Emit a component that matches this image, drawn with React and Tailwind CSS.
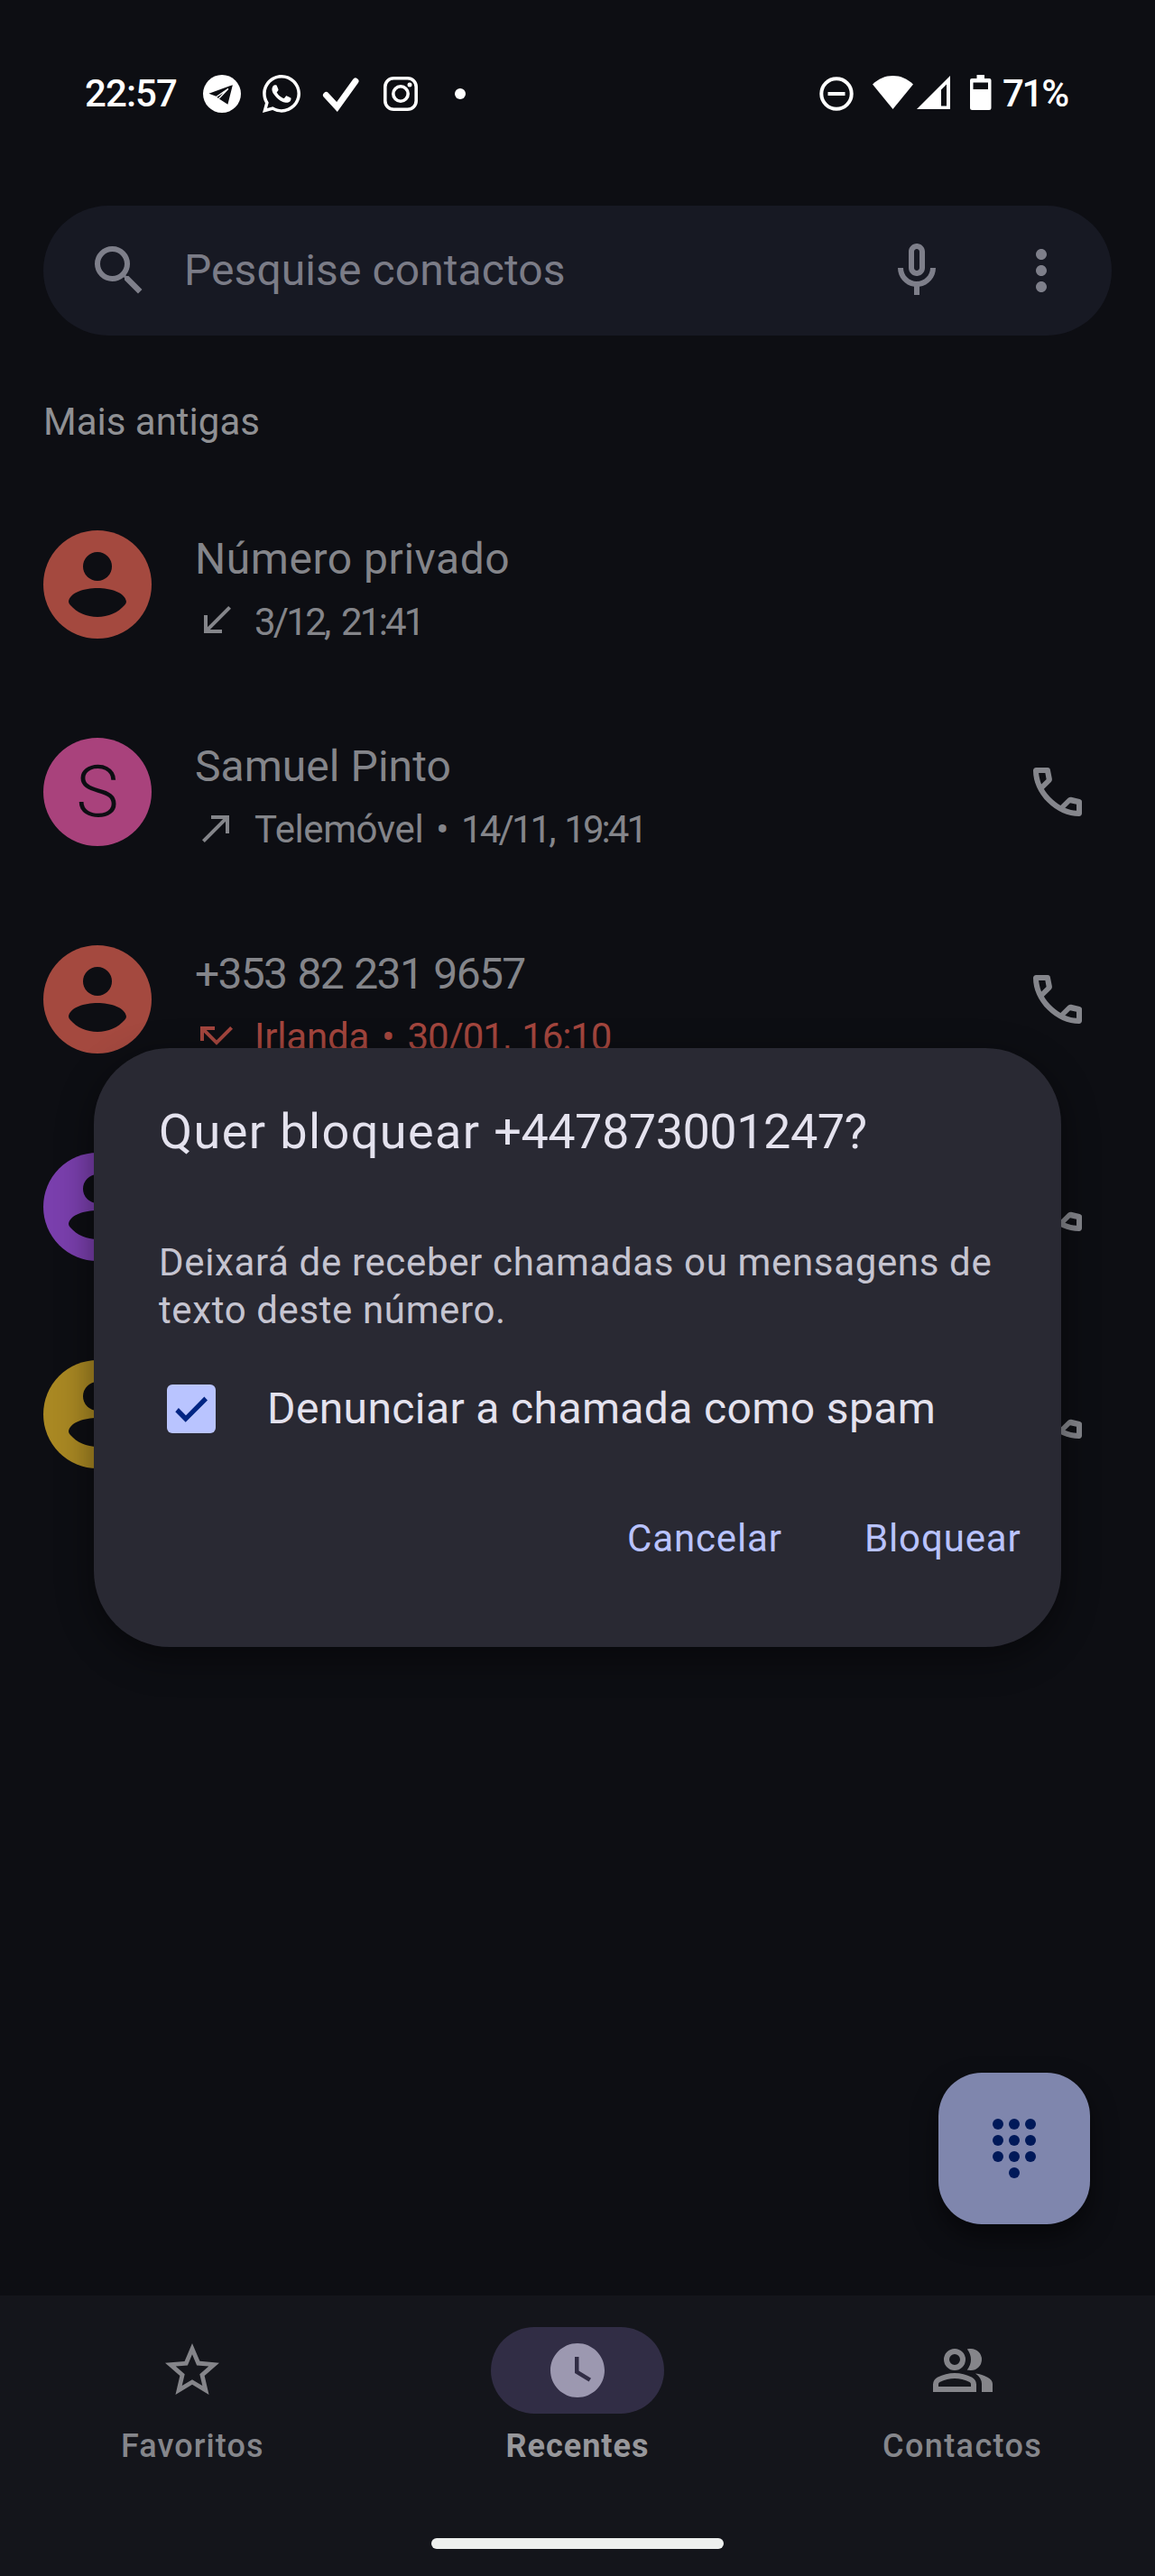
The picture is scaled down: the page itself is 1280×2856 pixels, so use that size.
import React from "react";
import {
  MdSearch,
  MdMoreVert,
  MdCallReceived,
  MdCallMade,
  MdCallMissed,
  MdStarBorder,
  MdWatchLater,
} from "react-icons/md";
import { FaWhatsapp } from "react-icons/fa";

function TelegramIcon() {
  return (
    <svg viewBox="0 0 124 124" className="size-[42px]">
      <circle cx="62" cy="62" r="62" fill="#fff" />
      <path d="M19 61 97 33 81 97 50 77 43 70Z" fill="#0d0e13" />
      <path d="M42 73 82 46 51 78" fill="none" stroke="#fff" strokeWidth="4" />
    </svg>
  );
}

function CheckMark() {
  return (
    <svg viewBox="0 0 42 42" className="size-[42px]" fill="none" stroke="#fff">
      <path d="M4.5 22.500 16.500 35.500 37 7" strokeWidth="7" strokeLinecap="round" />
    </svg>
  );
}

function InstagramIcon() {
  return (
    <svg viewBox="0 0 38 38" className="size-[38px]" fill="none" stroke="#fff">
      <rect x="1.800" y="1.800" width="34.400" height="34.400" rx="9.500" strokeWidth="3.600" />
      <circle cx="19" cy="19" r="8.200" strokeWidth="3.600" />
      <circle cx="29" cy="9" r="2.500" fill="#fff" stroke="none" />
    </svg>
  );
}

function DoNotDisturbIcon() {
  return (
    <svg viewBox="0 0 38 38" className="size-[38px]" fill="none" stroke="#fff" strokeWidth="4">
      <circle cx="19" cy="19" r="16.700" />
      <path d="M9.500 19h19" />
    </svg>
  );
}

function WifiIcon() {
  return (
    <svg viewBox="0 0 45 37" className="h-[37px] w-[45px]">
      <path d="M22.500 37 0 9.500C6.500 3.300 14 0 22.500 0S38.500 3.300 45 9.500Z" fill="#fff" />
    </svg>
  );
}

function SignalIcon() {
  return (
    <svg viewBox="0 0 37 37" className="size-[37px]">
      <path d="M37 0V37H0ZM33 9.500 27 15.500V33.500H33Z" fill="#fff" fillRule="evenodd" />
    </svg>
  );
}

function BatteryIcon() {
  return (
    <svg viewBox="0 0 24 39" className="h-[39px] w-[24px]">
      <path
        d="M7.500 0H16V4H21.500Q23.500 4 23.500 6V36.500Q23.500 39 21 39H2.500Q0 39 0 36.500V6Q0 4 2 4H7.500ZM3.500 8.500V16H20V8.500Z"
        fill="#fff"
        fillRule="evenodd"
      />
    </svg>
  );
}

function StatusBar() {
  return (
    <header className="flex h-[208px] shrink-0 items-center pr-[94px] pl-[94px] text-[42px] font-medium text-white">
      <span className="-mt-[1px] w-[131px] tracking-[-0.9px]">22:57</span>
      <TelegramIcon />
      <FaWhatsapp className="ml-[21px] size-[48px]" />
      <span className="ml-[21px]"><CheckMark /></span>
      <span className="ml-[26px]"><InstagramIcon /></span>
      <span className="ml-[41px] size-[12px] rounded-full bg-white" />
      <div className="ml-auto flex items-center">
        <DoNotDisturbIcon />
        <span className="-mt-[3px] ml-[21px]"><WifiIcon /></span>
        <span className="-mt-[3px] ml-[4px]"><SignalIcon /></span>
        <span className="-mt-[3px] ml-[22px]"><BatteryIcon /></span>
        <span className="-mt-[1px] ml-[12px] w-[75px] tracking-[-2.3px]">71%</span>
      </div>
    </header>
  );
}

function MicIcon() {
  return (
    <svg viewBox="0 0 24 24" className="size-[72px]" fill="currentColor">
      <path d="M12 14c1.660 0 3-1.340 3-3V5c0-1.660-1.340-3-3-3S9 3.340 9 5v6c0 1.660 1.340 3 3 3zm-1-9c0-.55.45-1 1-1s1 .45 1 1v6c0 .55-.45 1-1 1s-1-.45-1-1V5zm6 6c0 2.760-2.240 5-5 5s-5-2.240-5-5H5c0 3.530 2.610 6.430 6 6.920V21h2v-3.080c3.390-.49 6-3.390 6-6.920h-2z" />
    </svg>
  );
}

function SearchBar() {
  return (
    <div className="mx-[48px] mt-[20px] flex h-[144px] shrink-0 items-center rounded-full bg-[#171923] px-[42px] text-[#7e7f8a]">
      <MdSearch className="ml-[6px] size-[72px]" />
      <span className="ml-[36px] text-[48px] tracking-[0.08px] text-[#7b7c87]">Pesquise contactos</span>
      <span className="ml-auto"><MicIcon /></span>
      <MdMoreVert className="ml-[66px] size-[72px]" />
    </div>
  );
}

function PersonAvatar({ className }) {
  return (
    <svg viewBox="0 0 120 120" className={`size-[120px] shrink-0 ${className}`}>
      <circle cx="60" cy="60" r="60" fill="currentColor" />
      <circle cx="60" cy="40" r="16" fill="#0d0e13" />
      <path
        d="M28 79C29 69 46 64 60 64S91 69 92 79Q92 81 90 83C83 91 72 96 60 96S37 91 30 83Q28 81 28 79Z"
        fill="#0d0e13"
      />
    </svg>
  );
}

function PhoneIcon() {
  return (
    <svg viewBox="0 0 24 24" className="ml-auto size-[72px] text-[#85868c]" fill="currentColor">
      <path d="M19.950 21Q16.825 21 13.775 19.638Q10.725 18.275 8.225 15.775Q5.725 13.275 4.363 10.225Q3 7.175 3 4.050Q3 3.600 3.300 3.300Q3.600 3 4.050 3H8.400Q8.750 3 9.025 3.238Q9.250 3.475 9.300 3.800L9.950 7.100Q10 7.500 9.925 7.775Q9.850 8.050 9.600 8.300L6.975 10.900Q7.475 11.825 8.163 12.688Q8.850 13.550 9.675 14.350Q10.450 15.125 11.300 15.788Q12.150 16.450 13.100 17L15.800 14.350Q16.025 14.125 16.338 14.012Q16.700 13.900 17.050 13.950L20.200 14.650Q20.550 14.750 20.775 15.012Q21 15.275 21 15.600V19.950Q21 20.400 20.700 20.700Q20.400 21 19.950 21ZM6.025 9.200 7.875 7.350 7.450 5H5.025Q5.150 6.025 5.375 7.025Q5.600 8.225 6.025 9.200ZM14.775 17.950Q15.950 18.375 16.963 18.625Q17.975 18.875 19 18.950V16.550L16.650 16.075Z" />
    </svg>
  );
}

function CallRow({ avatar, name, nameClass, Arrow, detail, detailClass, phone }) {
  return (
    <li className="flex h-[230px] items-center pr-[72px] pl-[48px]">
      {avatar}
      <div className="ml-[48px] pt-[14px] leading-[70px] whitespace-nowrap">
        <p className={`h-[70px] text-[48px] ${nameClass}`}>{name}</p>
        <p className={`flex h-[70px] items-center text-[42px] ${detailClass}`}>
          {Arrow && <Arrow className="-mt-[4px] mr-[18px] size-[48px]" />}
          {detail}
        </p>
      </div>
      {phone && <PhoneIcon />}
    </li>
  );
}

function CallList() {
  return (
    <ul className="mt-[35px] shrink-0">
      <CallRow
        avatar={<PersonAvatar className="text-[#a4493f]" />}
        name="Número privado"
        nameClass="tracking-[0.54px] text-[#84858a]"
        Arrow={MdCallReceived}
        detail={<span className="tracking-[-2.8px] [word-spacing:6px]">3/12, 21:41</span>}
        detailClass="text-[#84858a]"
      />
      <CallRow
        avatar={
          <span className="flex size-[120px] items-center justify-center rounded-full bg-[#a9427c] text-[80px] font-light text-[#0d0e13]">
            S
          </span>
        }
        name="Samuel Pinto"
        nameClass="tracking-[0.05px] text-[#84858a]"
        Arrow={MdCallMade}
        detail={
          <span className="tracking-[-0.4px] [word-spacing:4px]">
            Telemóvel • <span className="tracking-[-2.9px]">14/11, 19:41</span>
          </span>
        }
        detailClass="text-[#84858a]"
        phone
      />
      <CallRow
        avatar={<PersonAvatar className="text-[#a4493f]" />}
        name="+353 82 231 9657"
        nameClass="tracking-[-1.7px] [word-spacing:2px] text-[#84858a]"
        Arrow={MdCallMissed}
        detail={
          <span className="tracking-[-0.2px] [word-spacing:4px]">
            Irlanda • <span className="tracking-[-1.1px]">30/01, 16:10</span>
          </span>
        }
        detailClass="text-[#a4463e]"
        phone
      />
      <CallRow avatar={<PersonAvatar className="text-[#7a3fad]" />} phone />
      <CallRow avatar={<PersonAvatar className="text-[#a98823]" />} phone />
    </ul>
  );
}

const DIAL_DOTS = [
  [6, 6], [24, 6], [42, 6],
  [6, 24], [24, 24], [42, 24],
  [6, 42], [24, 42], [42, 42],
  [24, 60],
];

function DialpadButton() {
  return (
    <button className="mt-auto mr-[72px] mb-[79px] flex size-[168px] shrink-0 items-start justify-center self-end rounded-[48px] bg-[#7f86ad] pt-[51px] shadow-[0_14px_28px_rgba(0,0,0,0.5)]">
      <svg viewBox="0 0 48 66" className="h-[66px] w-[48px]" fill="#001959">
        {DIAL_DOTS.map(([x, y]) => (
          <circle key={`${x}-${y}`} cx={x} cy={y} r="6" />
        ))}
      </svg>
    </button>
  );
}

function GroupIcon() {
  return (
    <svg viewBox="0 0 24 24" className="size-[72px]" fill="currentColor">
      <path d="M1 20v-2.800q0-.85.438-1.563.437-.712 1.162-1.087 1.550-.775 3.150-1.163Q7.350 13 9 13t3.250.387q1.600.388 3.150 1.163.725.375 1.162 1.087Q17 16.350 17 17.200V20zm18 0v-3q0-1.100-.613-2.113-.612-1.012-1.737-1.737 1.275.15 2.400.512 1.125.363 2.100.888.9.5 1.375 1.112Q23 16.275 23 17v3zM9 12q-1.650 0-2.825-1.175Q5 9.650 5 8q0-1.650 1.175-2.825Q7.350 4 9 4q1.650 0 2.825 1.175Q13 6.350 13 8q0 1.650-1.175 2.825Q10.650 12 9 12zm10-4q0 1.650-1.175 2.825Q16.650 12 15 12q-.275 0-.7-.062-.425-.063-.7-.138.675-.8 1.037-1.775Q15 9.050 15 8q0-1.050-.363-2.025Q14.275 5 13.600 4.200q.35-.125.7-.163Q14.650 4 15 4q1.650 0 2.825 1.175Q19 6.350 19 8zM3 18h12v-.8q0-.275-.137-.5-.138-.225-.363-.35-1.350-.675-2.725-1.012Q10.400 15 9 15t-2.775.338Q4.850 15.675 3.500 16.350q-.225.125-.362.35-.138.225-.138.5zm6-8q.825 0 1.413-.588Q11 8.825 11 8t-.587-1.412Q9.825 6 9 6q-.825 0-1.412.588Q7 7.175 7 8t.588 1.412Q8.175 10 9 10z" />
    </svg>
  );
}

function NavItem({ icon, label, pillClass, labelClass }) {
  return (
    <div className="flex flex-col items-center">
      <span className={`flex h-[96px] w-[192px] items-center justify-center rounded-full ${pillClass}`}>{icon}</span>
      <span className={`mt-[11px] text-[36px] leading-[50px] ${labelClass}`}>{label}</span>
    </div>
  );
}

function BottomNav() {
  return (
    <nav className="flex h-[311px] shrink-0 flex-col items-center bg-[#14151b] pt-[35px]">
      <div className="grid w-full grid-cols-3">
        <NavItem
          icon={<MdStarBorder className="size-[72px]" />}
          label="Favoritos"
          pillClass="text-[#85858a]"
          labelClass="font-medium tracking-[1.1px] text-[#85868b]"
        />
        <NavItem
          icon={<MdWatchLater className="size-[72px]" />}
          label="Recentes"
          pillClass="bg-[#312d45] text-[#9c98b0]"
          labelClass="font-bold tracking-[1px] text-[#97979b]"
        />
        <NavItem
          icon={<GroupIcon />}
          label="Contactos"
          pillClass="text-[#85858a]"
          labelClass="font-medium tracking-[1.4px] text-[#85868b]"
        />
      </div>
      <div className="mt-[77px] h-[12px] w-[324px] rounded-full bg-[#edefee]" />
    </nav>
  );
}

function BlockDialog() {
  return (
    <div
      role="dialog"
      className="absolute top-[1162px] left-[104px] h-[664px] w-[1072px] rounded-[84px] bg-[#292933] pt-[62px] pl-[72px] whitespace-nowrap shadow-[0_12px_40px_rgba(0,0,0,0.45)]"
    >
      <h2 className="text-[54px] leading-[62px] tracking-[1.4px] text-[#e4e2ee]">
        Quer bloquear <span className="tracking-[-0.5px]">+447873001247?</span>
      </h2>
      <p className="mt-[87px] text-[42px] leading-[53px] text-[#c5c4d0]">
        <span className="block tracking-[0.65px]">Deixará de receber chamadas ou mensagens de</span>
        <span className="block tracking-[0.62px]">texto deste número.</span>
      </p>
      <div className="mt-[56px] flex h-[54px] items-center">
        <span className="ml-[9px] size-[54px] rounded-[6px] bg-[#b9c4ff]">
          <svg viewBox="3 3 18 18" className="size-[54px]" fill="#002583">
            <path d="M9.900 16.900 6.100 13.100 7.300 11.700 10 14.400 16.800 7.500 18 8.800Z" />
          </svg>
        </span>
        <span className="ml-[57px] text-[48px] tracking-[0.38px] text-[#e4e2ee]">Denunciar a chamada como spam</span>
      </div>
      <div className="mt-[87px] flex pl-[519px] text-[42px] leading-[60px] text-[#b9c3ff]">
        <button className="w-[263px] text-left tracking-[0.86px]">Cancelar</button>
        <button className="tracking-[0.86px]">Bloquear</button>
      </div>
    </div>
  );
}

export default function App() {
  return (
    <div className="relative flex h-[2856px] w-[1280px] flex-col overflow-hidden bg-[#0d0e13] font-['Roboto',sans-serif]">
      <StatusBar />
      <SearchBar />
      <h1 className="mt-[66px] ml-[48px] shrink-0 text-[42px] leading-[60px] text-[#8f9093]">Mais antigas</h1>
      <CallList />
      <DialpadButton />
      <BottomNav />
      <BlockDialog />
    </div>
  );
}
